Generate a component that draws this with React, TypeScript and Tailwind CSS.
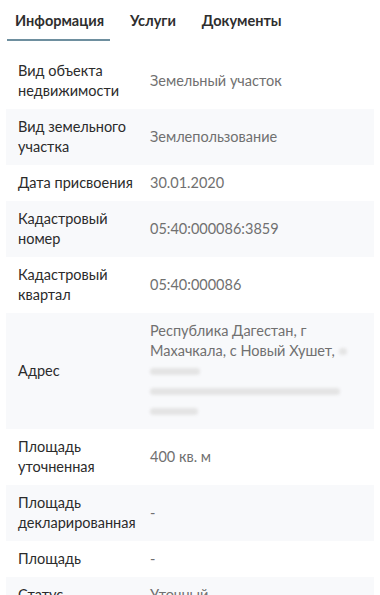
import React from "react";

const font = { fontFamily: "Lato, 'Noto Sans', sans-serif" };

function Row({ label, children, gray }: { label: React.ReactNode; children: React.ReactNode; gray?: boolean }) {
  return (
    <div className={`flex items-center px-3 py-2 ${gray ? "bg-[#f8f9fb]" : "bg-white"}`}>
      <div className="w-[132px] shrink-0 text-[14.5px] leading-[20px] text-[#2b2b2b]">{label}</div>
      <div className="flex-1 text-[14.5px] leading-[20px] text-[#707070]">{children}</div>
    </div>
  );
}

function Blob({ w }: { w: number }) {
  return <span className="inline-block h-[7px] rounded-full bg-[#e4e4e4] blur-[1.5px] align-middle" style={{ width: w }} />;
}

export default function App() {
  return (
    <div className="w-[380px] h-[595px] overflow-hidden bg-white" style={font}>
      <div className="flex gap-[26px] px-[15px] pt-[11px] text-[14.5px] font-bold text-[#2e2e2e] leading-[20px]">
        <div>Информация</div>
        <div>Услуги</div>
        <div>Документы</div>
      </div>
      <div className="ml-[7px] mt-[8px] h-[2px] w-[103px] bg-[#6e8f9f]" />
      <div className="mx-[6px] mt-[12px] flex flex-col">
        <Row label={<>Вид объекта<br />недвижимости</>}>Земельный участок</Row>
        <Row gray label={<>Вид земельного<br />участка</>}>Землепользование</Row>
        <Row label="Дата присвоения">30.01.2020</Row>
        <Row gray label={<>Кадастровый<br />номер</>}>05:40:000086:3859</Row>
        <Row label={<>Кадастровый<br />квартал</>}>05:40:000086</Row>
        <Row gray label="Адрес">
          <div>Республика Дагестан, г</div>
          <div className="flex items-center gap-1">Махачкала, с Новый Хушет, <Blob w={8} /></div>
          <div className="h-[20px] flex items-center"><Blob w={50} /></div>
          <div className="h-[20px] flex items-center"><Blob w={190} /></div>
          <div className="h-[20px] flex items-center"><Blob w={48} /></div>
        </Row>
        <Row label={<>Площадь<br />уточненная</>}>400 кв. м</Row>
        <Row gray label={<>Площадь<br />декларированная</>}>-</Row>
        <Row label="Площадь">-</Row>
        <Row gray label="Статус">Уточный</Row>
      </div>
    </div>
  );
}
